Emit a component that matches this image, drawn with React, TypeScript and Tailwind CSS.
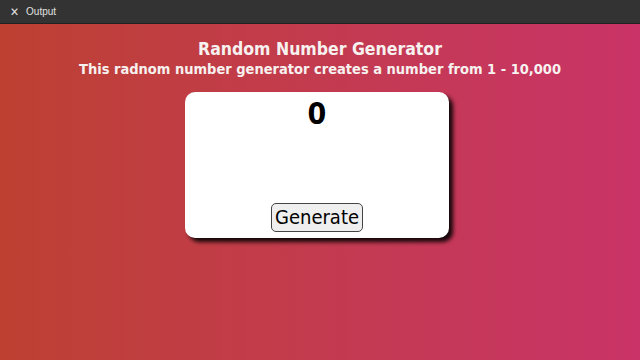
import React from "react";

export default function App() {
  return (
    <div className="w-[640px] h-[360px] flex flex-col overflow-hidden" style={{ fontFamily: '"DejaVu Sans Condensed", "DejaVu Sans", Verdana, sans-serif' }}>
      <div className="h-[24px] bg-[#333333] flex items-center px-[10px] gap-[7px] border-b border-[#222]">
        <span className="text-[#e0e0e0] text-[12px] font-bold leading-none">✕</span>
        <span className="text-[#e0e0e0] text-[10px] leading-none" style={{ fontFamily: '"Liberation Sans", Arial, sans-serif' }}>Output</span>
      </div>
      <div className="flex-1 bg-gradient-to-r from-[#bd4031] to-[#c93367] flex flex-col items-center pt-[14px]">
        <h1 className="text-[#f7f1ef] text-[17.5px] font-bold leading-[22px]">Random Number Generator</h1>
        <h2 className="text-[#f7f1ef] text-[14.5px] font-bold leading-[18px]">This radnom number generator creates a number from 1 - 10,000</h2>
        <div className="mt-[14px] mr-[6px] w-[264px] h-[146px] bg-white rounded-[10px] shadow-[4px_4px_4px_rgba(0,0,0,0.9)] flex flex-col items-center justify-between pt-[3px] pb-[6px]">
          <div className="text-black text-[30px] font-bold leading-[38px]">0</div>
          <button className="text-[20px] leading-[24px] px-[3px] pt-[1px] pb-[2px] bg-[#efefef] border border-[#444] rounded-[5px] text-black">Generate</button>
        </div>
      </div>
    </div>
  );
}
